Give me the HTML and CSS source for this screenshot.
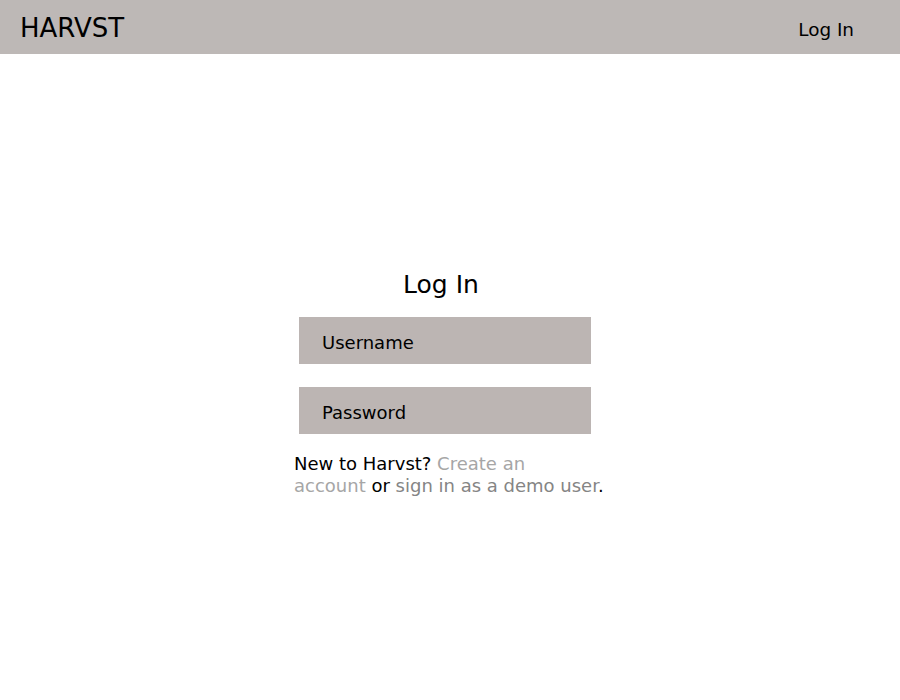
FILE: index.html
```html
<!DOCTYPE html>
<html>
<head>
<meta charset="utf-8">
<link rel="stylesheet" href="styles.css">
</head>
<body>
<header class="topbar">
  <div class="logo">HARVST</div>
  <a class="nav-login">Log In</a>
</header>
<main class="main">
  <form class="login">
    <h1 class="title">Log In</h1>
    <input class="field" type="text" placeholder="Username">
    <input class="field field-last" type="password" placeholder="Password">
    <p class="note">New to Harvst? <a class="link-create">Create an<br>account</a> or <a class="link-demo">sign in as a demo user</a>.</p>
  </form>
</main>
</body>
</html>
```
FILE: styles.css
```css
html, body {
  margin: 0;
  padding: 0;
  background: #ffffff;
  font-family: "DejaVu Sans", sans-serif;
  color: #000;
}
.topbar {
  height: 54px;
  background: #bdb8b6;
  display: flex;
  align-items: center;
  justify-content: space-between;
  padding: 0 46px 0 20px;
}
.logo {
  font-size: 26px;
  margin-top: 2px;
}
.nav-login {
  font-size: 18.4px;
  margin-top: 4px;
}
.main {
  display: flex;
  justify-content: center;
  padding-top: 215px;
}
.login {
  width: 308px;
  display: flex;
  flex-direction: column;
  align-items: flex-start;
  margin-left: -4px;
}
.title {
  align-self: center;
  font-size: 25px;
  font-weight: normal;
  margin: 0 0 16px 0;
  padding-right: 14px;
  line-height: 32px;
}
.field {
  box-sizing: border-box;
  width: 292px;
  height: 47px;
  margin: 0 0 23px 5px;
  border: none;
  background: #bcb5b3;
  padding: 3px 0 0 23px;
  font-family: "DejaVu Sans", sans-serif;
  font-size: 18px;
  outline: none;
}
.field-last {
  margin-bottom: 19px;
}
.field::placeholder {
  color: #000;
}
.note {
  margin: 0;
  font-size: 18px;
  line-height: 22px;
  width: 330px;
  white-space: nowrap;
}
.link-create { color: #a6a6a6; }
.link-demo { color: #858585; }
```
